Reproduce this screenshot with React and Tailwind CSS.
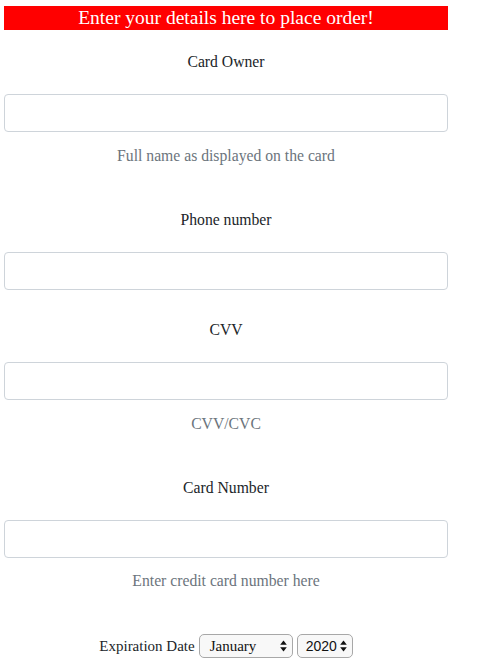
import React from "react";

const Arrows = () => (
  <svg width="7" height="12" viewBox="0 0 7 12" className="shrink-0">
    <path d="M3.5 0.5 L6.8 4.8 L0.2 4.8 Z" fill="#111" />
    <path d="M3.5 11.5 L6.8 7.2 L0.2 7.2 Z" fill="#111" />
  </svg>
);

function Field({ label, help, labelMt, helpMt }) {
  return (
    <div>
      <div className={`text-center text-[15.7px] leading-[24px] text-[#212529] ${labelMt}`}>{label}</div>
      <input className="mt-[20px] block w-full h-[38px] rounded-[4px] border border-[#ced4da] bg-white outline-none" />
      {help && (
        <div className={`text-center text-[15.7px] leading-[20px] text-[#6c757d] ${helpMt}`}>{help}</div>
      )}
    </div>
  );
}

export default function App() {
  return (
    <div className="w-[490px] h-[668px] bg-white overflow-hidden" style={{ fontFamily: '"Liberation Serif", serif' }}>
      <div className="w-[444px] ml-[4px] pt-[6px]">
        <div className="h-[24px] bg-[#ff0000] text-white text-center text-[19.5px] leading-[24px]">
          Enter your details here to place order!
        </div>
        <Field label="Card Owner" help="Full name as displayed on the card" labelMt="mt-[20px]" helpMt="mt-[14px]" />
        <Field label="Phone number" labelMt="mt-[42px]" />
        <Field label="CVV" help="CVV/CVC" labelMt="mt-[28px]" helpMt="mt-[14px]" />
        <Field label="Card Number" help="Enter credit card number here" labelMt="mt-[42px]" helpMt="mt-[13px]" />
        <div className="mt-[43px] flex items-center justify-center gap-[4px]">
          <span className="text-[15px] leading-[24px] text-[#212529]">Expiration Date</span>
          <div className="flex items-center justify-between w-[94px] h-[24px] rounded-[5px] border border-[#a8a8a8] bg-[#f8f8f8] pl-[10px] pr-[5px] text-[15px] text-[#111]">
            <span>January</span>
            <Arrows />
          </div>
          <div className="flex items-center justify-between w-[56px] h-[24px] rounded-[5px] border border-[#a8a8a8] bg-[#f8f8f8] pl-[8px] pr-[5px] text-[14px] text-[#111]" style={{ fontFamily: '"Liberation Sans", sans-serif' }}>
            <span>2020</span>
            <Arrows />
          </div>
        </div>
      </div>
    </div>
  );
}
